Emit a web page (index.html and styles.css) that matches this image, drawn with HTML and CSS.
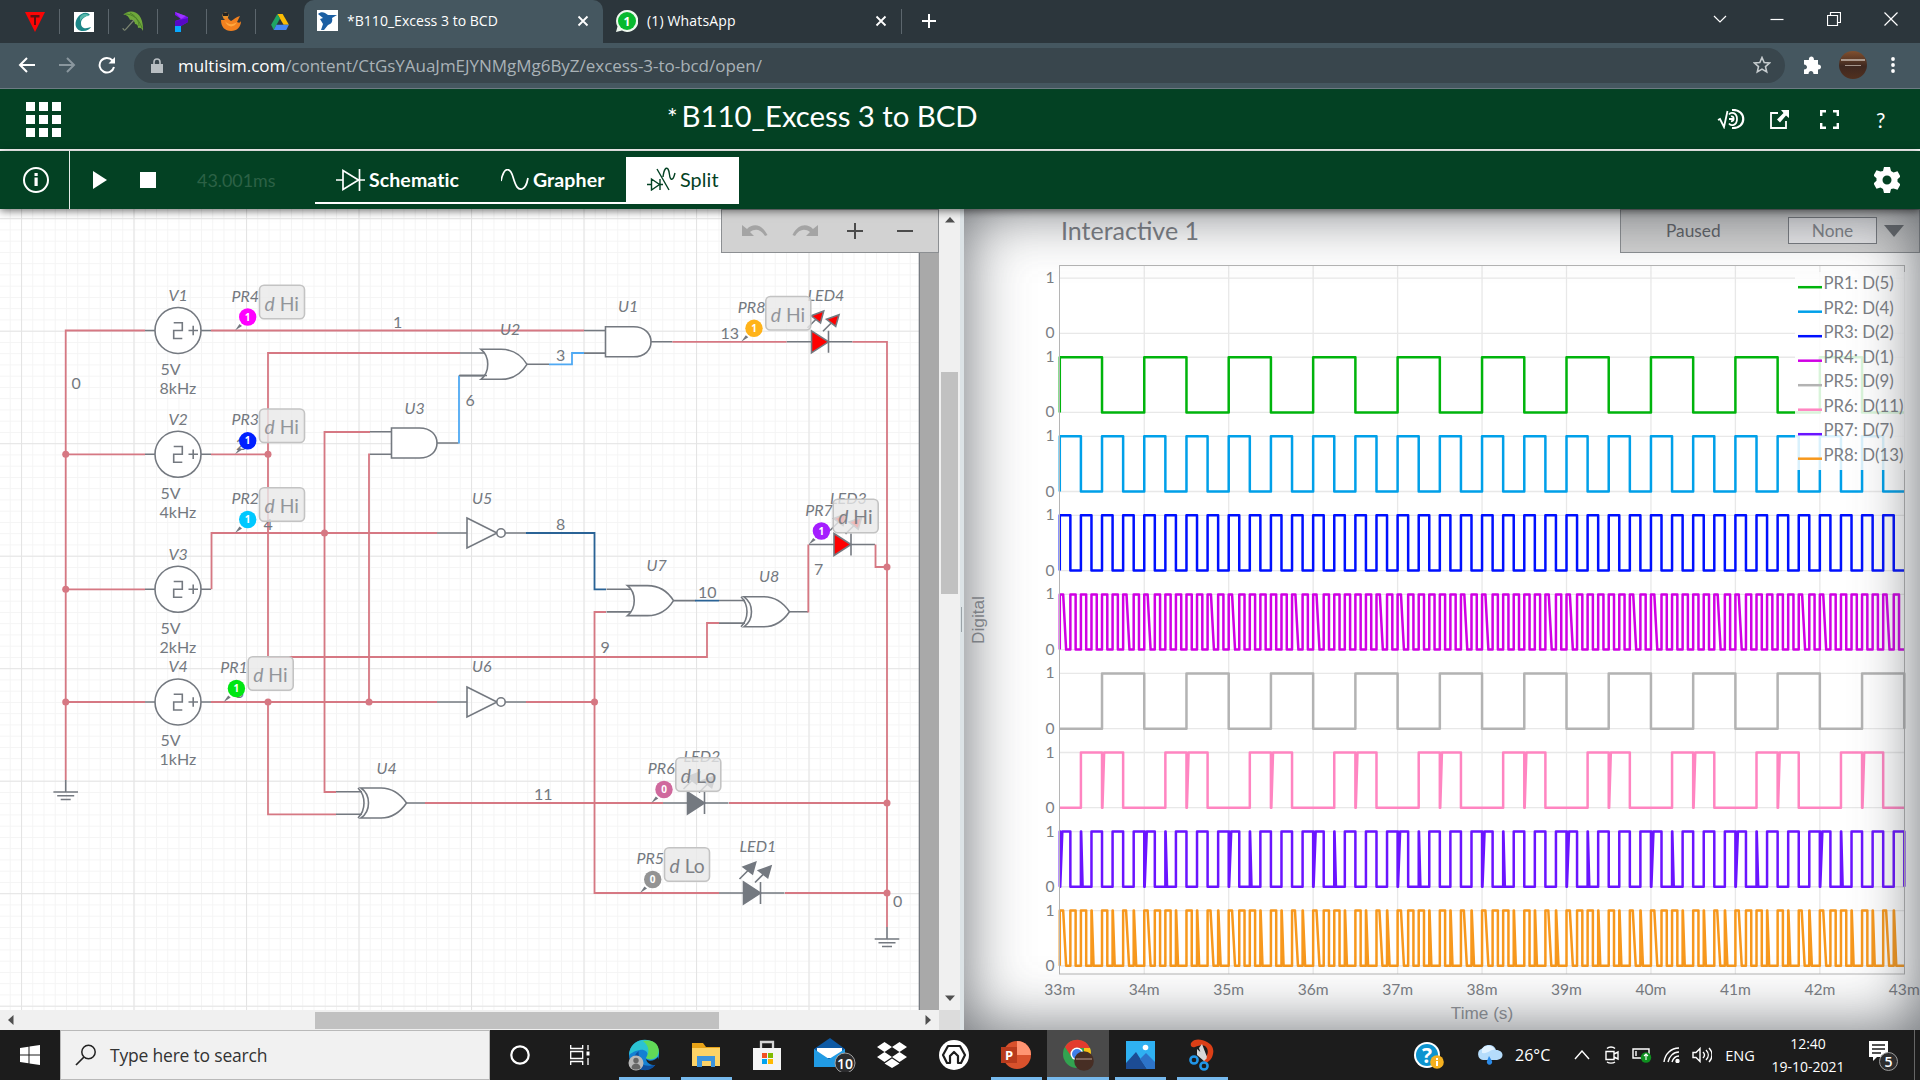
FILE: index.html
```html
<!DOCTYPE html>
<html lang="en">
<head>
<meta charset="utf-8">
<title>*B110_Excess 3 to BCD</title>
<link rel="stylesheet" href="styles.css">
</head>
<body>
<div class="screen">

  <div class="tabstrip">
    <div class="pinned"><svg width="20" height="20" viewBox="0 0 20 20"><path d="M0 0h20L10 20z" fill="#fb0505"/><path d="M5.500 3h9v2.500H11V13H9V5.500H5.500z" fill="#5d1010"/></svg></div>
    <div class="pinned"><svg width="20" height="20" viewBox="0 0 20 20"><path d="M0 0h20v20H0z" fill="#fff"/><path d="M16 3C13-1 7 1 4 5c-5 7-2 14 5 14 4 0 7-2 8-4-5 2-10 2-10-4 0-4 4-7 9-8z" fill="#1c8587"/><path d="M6 5c3-4 7-4 9-1-4 0-7 2-9 5z" fill="#55b6a9"/></svg></div>
    <div class="pinned"><svg width="22" height="22" viewBox="0 0 22 22"><path d="M1 4C8-3 22 0 21 20c-1-3-3-4-5-3 0-3-1-4-3-4 0-3-3-5-5-4C7 6 4 3 1 4z" fill="#6fa83b"/><path d="M3 3c8 0 14 5 17 14M8 2c6 3 9 8 9 13" stroke="#4b7f28" fill="none" stroke-width="1"/><path d="M12 9L4 18c-1 2-3 1-3-1" stroke="#7c8570" stroke-width="1.200" fill="none"/></svg></div>
    <div class="pinned"><svg width="14" height="20" viewBox="0 0 14 20"><path d="M0 0l13 5v5l-7 4H0V9l6-2-6-4z" fill="#7b12f4"/><path d="M0 0l11 4-5 3z" fill="#9d35ff"/><path d="M0 13l6-2v9H0z" fill="#08a8ff"/><path d="M0 9l13-3v4l-7 4H0z" fill="#5708c7"/></svg></div>
    <div class="pinned"><svg width="20" height="20" viewBox="0 0 20 20"><path d="M0 8c0 7 4 11 10 11s10-4 10-10c-1 2-2 2-4 1l3-6c-4 1-7 4-9 5C8 8 7 6 6 4L2 6l2 2z" fill="#f2811f"/><path d="M4 9c3 4 8 4 12 1-2 5-9 7-12-1z" fill="#ffa83f"/><circle cx="4.500" cy="3.500" r="3" fill="#e8932b"/><path d="M2 1h5v3H2z" fill="#222"/></svg></div>
    <div class="pinned last"><svg width="18" height="16" viewBox="0 0 20 18"><path d="M7 0h6l7 12h-6z" fill="#fbbc04"/><path d="M7 0L0 12l3 6L10 5z" fill="#1fa463"/><path d="M6 12h14l-3 6H3z" fill="#4587f4"/></svg></div>
    <div class="tab active">
      <svg class="favicon" width="21" height="21" viewBox="0 0 21 21"><path d="M0 0h21v21H0z" fill="#fff"/><path d="M1 4c2-2 5-2 7-1l3 2h9l-5 3c1 4-1 6-4 7l-4 5H4l2-6-3-5 3-1z" fill="#1b5fa3"/></svg>
      <span class="tab-title t1">*B110_Excess 3 to BCD</span>
      <svg class="tab-close" width="12" height="12" viewBox="0 0 12 12"><path d="M1.500 1.500l9 9M10.500 1.500l-9 9"/></svg>
    </div>
    <div class="tab">
      <svg class="favicon" width="22" height="22" viewBox="0 0 22 22"><path d="M11 0a11 11 0 1 1-5 20.600L0 22l1.500-5.500A11 11 0 0 1 11 0z" fill="#eef8ee"/><circle cx="11" cy="11" r="9" fill="#08b92f"/><text x="11" y="15.500" text-anchor="middle" class="wa-count">1</text></svg>
      <span class="tab-title t2">(1) WhatsApp</span>
      <svg class="tab-close" width="12" height="12" viewBox="0 0 12 12"><path d="M1.500 1.500l9 9M10.500 1.500l-9 9"/></svg>
    </div>
    <svg class="new-tab" width="16" height="16" viewBox="0 0 16 16"><path d="M8 1v14M1 8h14"/></svg>
    <div class="window-controls">
      <svg width="14" height="14" viewBox="0 0 14 14"><path d="M1 4l6 6 6-6"/></svg>
      <svg width="14" height="14" viewBox="0 0 14 14"><path d="M.500 7.500h13"/></svg>
      <svg width="14" height="14" viewBox="0 0 14 14"><path d="M.500 3.500h10v10H.500zM3.500 3V.500h10v10H11"/></svg>
      <svg width="14" height="14" viewBox="0 0 14 14"><path d="M.500.500l13 13M13.500.500l-13 13"/></svg>
    </div>
  </div>

  <div class="navbar">
    <svg width="18" height="18" viewBox="0 0 18 18" class="nav"><path d="M17 9H2M9 2L2 9l7 7"/></svg>
    <svg width="18" height="18" viewBox="0 0 18 18" class="nav dim"><path d="M1 9h15M9 2l7 7-7 7"/></svg>
    <svg width="18" height="18" viewBox="0 0 18 18" class="nav"><path d="M16 11a7.300 7.300 0 1 1-1.500-6.500L16 6"/><path d="M17 1v6.500h-6.500z" fill="#fff" stroke="none"/></svg>
    <div class="omnibox">
      <svg width="12" height="15" viewBox="0 0 12 15"><path d="M0 6h12v9H0z" fill="#b8bec2"/><path d="M3 6V4a3 3 0 0 1 6 0v2" fill="none" stroke="#b8bec2" stroke-width="1.600"/></svg>
      <span class="url"><b>multisim.com</b>/content/CtGsYAuaJmEJYNMgMg6ByZ/excess-3-to-bcd/open/</span>
      <svg class="star" width="18" height="18" viewBox="0 0 18 18"><path d="M9 1.500l2.200 5 5.300.500-4 3.600 1.200 5.300L9 13.100l-4.700 2.800 1.200-5.300-4-3.600 5.300-.500z"/></svg>
    </div>
    <svg class="puzzle" width="18" height="18" viewBox="0 0 18 18"><path d="M1 4h5c-1-4 5-5 5 0h4v4.500c4 0 4 5 0 5V18h-4.500c0-4-5-4-5 0H1v-4.500c4 0 4-4.500 0-5z" fill="#fff"/></svg>
    <div class="avatar"><i></i><i></i></div>
    <svg width="4" height="18" viewBox="0 0 4 18"><circle cx="2" cy="3" r="1.900"/><circle cx="2" cy="9" r="1.900"/><circle cx="2" cy="15" r="1.900"/></svg>
  </div>

  <div class="app-header">
    <div class="apps"><i></i><i></i><i></i><i></i><i></i><i></i><i></i><i></i><i></i></div>
    <h1><sup>*</sup>B110_Excess 3 to BCD</h1>
    <div class="header-icons">
      <svg width="29" height="20" viewBox="0 0 29 20"><path d="M1 11l2-1 4 8L10.500 2"/><path d="M12 5.500c2-3 8-2 8 4.500s-6 7.500-8 4.500M12 10h5M14 7.500c3-1 4 4 0 5"/><path d="M15 1c15-1 15 19 0 18" stroke-width="2.200"/></svg>
      <svg width="19" height="19" viewBox="0 0 19 19"><path d="M8 3H1v15h15v-7"/><path d="M11 0h8v8l-3-2.500-6 7-3-3 6.500-6.500z" fill="#fff" stroke="none"/></svg>
      <svg width="19" height="19" viewBox="0 0 19 19"><path d="M1.200 6V1.200H6M13 1.200h4.800V6M17.800 13v4.800H13M6 17.800H1.200V13" stroke-width="2.400"/></svg>
      <span>?</span>
    </div>
  </div>

  <div class="app-toolbar">
    <div class="info"><svg width="28" height="28" viewBox="0 0 28 28"><circle cx="14" cy="14" r="12" fill="none" stroke="#fff" stroke-width="2"/><path d="M12.500 11.500h3.200V20h-3.200zM12.500 7h3.200v3h-3.200z" fill="#fff"/></svg></div>
    <svg class="play" width="14" height="18" viewBox="0 0 14 18"><path d="M0 0l14 9L0 18z" fill="#fff"/></svg>
    <div class="stop"></div>
    <span class="sim-time">43.001ms</span>
    <div class="views">
      <div class="view schematic"><svg width="29" height="22" viewBox="0 0 29 22"><path d="M0 11h7M7 1.500v19L22.500 11zM23.500 0v22M23.500 11H29"/></svg>Schematic</div>
      <div class="view grapher"><svg width="28" height="22" viewBox="0 0 28 22"><path d="M0 12C3-3 9-2 12 8s5 13 9 12c4-1 5-6 6-11"/></svg>Grapher</div>
      <div class="view split"><svg width="29" height="24" viewBox="0 0 29 24"><path d="M0 17.500h4.500M4.500 12v11l8-5.500zM13 12v11M13 17.500h3M10 2l12 21M16 10c1-8 3-10 5-8 2 3 1 9 3 10 2 1 3-2 4-6"/></svg>Split</div>
    </div>
    <svg class="gear" width="26" height="28" viewBox="-13 -14 26 28"><path fill-rule="evenodd" d="M-3-13h6l1 4 2.500 1.500 4-1.200 3 5.200-3 2.800v2.400l3 2.800-3 5.200-4-1.200L4 9l-1 4h-6l-1-4-2.500-1.500-4 1.200-3-5.200 3-2.800v-2.400l-3-2.800 3-5.200 4 1.200L-4-9zM0-4.500A4.500 4.500 0 1 0 0 4.500 4.500 4.500 0 1 0 0-4.500z" fill="#fff"/></svg>
  </div>

  <div class="workspace">
    <div class="schematic-pane">
      <div class="canvas">
        <svg class="drawing" width="939" height="801" viewBox="0 209 939 801">
          <defs>
            <pattern id="minor" width="11.25" height="11.25" patternUnits="userSpaceOnUse" x="21" y="218.200"><path d="M0 .500H11.250M.500 0V11.250" stroke="#f4f4f4" stroke-width="1" fill="none"/></pattern>
            <pattern id="major" width="112.500" height="112.500" patternUnits="userSpaceOnUse" x="21" y="218.200"><path d="M0 .500H112.500M.500 0V112.500" stroke="#e4e4e4" stroke-width="1.200" fill="none"/></pattern>
            <g id="source"><path d="M-33 0h10M23 0h10"/><circle r="23" fill="#fff"/><path d="M-4.300-7.800H4.300V0H-4.300V8H4.300M10.500 0h9.500M15.200-4.700v9.400"/></g>
            <g id="and"><path d="M-21.500-11.300H0M-21.500 11.300H0M45.500 0H67"/><path d="M0-15H28C39.500-15 45.500-8 45.500 0S39.500 15 28 15H0z" fill="#fff"/></g>
            <g id="or"><path d="M-21-11.300H5.500M-21 11.300H5.500M46 0H68"/><path d="M0-15H20C32-15 41-8 46 0 41 8 32 15 20 15H0C9 8 9-8 0-15z" fill="#fff"/></g>
            <g id="xor"><path d="M-22-11.300H4M-22 11.300H4M48.500 0H67"/><path d="M3-15H23C34-15 43-8 48.500 0 43 8 34 15 23 15H3C13 8 13-8 3-15z" fill="#fff"/><path d="M0-15C8-7 8 7 0 15"/></g>
            <g id="not"><path d="M-30 0H0M38 0H59.500M0-15L30 0 0 15z"/><circle cx="34" r="4.200" fill="#fff"/></g>
            <g id="led"><path d="M-25 0H0M17 0H41M17-11V11"/><path d="M0-11L17 0 0 11z"/><path d="M-4-14L8-26M11.500-10.500L23-22"/><path d="M12.200-30.700L-.300-26 9-19zM27.500-27L15-22.500l9.200 7.200z"/></g>
            <g id="ground"><path d="M0-11V1M-12.300 1H12.300M-8.500 4.700H8.500M-5 8.500H5"/></g>
            <path id="pointer" d="M0 0L4.500-6.500 7-4.500z"/>
          </defs>
          <rect x="0" y="209" width="919" height="801" fill="#fff"/>
          <rect x="0" y="209" width="919" height="801" fill="url(#minor)"/>
          <rect x="0" y="209" width="919" height="801" fill="url(#major)"/>
          <rect x="919" y="209" width="20" height="801" fill="#a9a9a9"/>
          <rect x="918.700" y="209" width="1.300" height="801" fill="#777c82"/>

          <g class="parts">
            <use href="#source" x="178" y="330.500"/><use href="#source" x="178" y="454.300"/><use href="#source" x="178" y="589.300"/><use href="#source" x="178" y="702"/>
            <use href="#and" x="605.500" y="341.800"/><use href="#and" x="391.500" y="443"/>
            <use href="#or" x="481" y="364.300"/><use href="#or" x="627.500" y="600.600"/>
            <use href="#xor" x="741" y="611.800"/><use href="#xor" x="358" y="803"/>
            <use href="#not" x="467" y="533"/><use href="#not" x="467" y="702"/>
            <use href="#ground" x="65.700" y="791"/><use href="#ground" x="887" y="938"/>
            <use href="#led" class="lit" x="811.500" y="341.800"/><use href="#led" class="lit" x="834" y="544.500"/>
            <use href="#led" class="unlit" x="687.500" y="803"/><use href="#led" class="unlit" x="743.500" y="893"/>
          </g>
          <g class="wires">
            <path d="M145 330.500H65.700V780M65.700 454.300H145M65.700 589.300H145M65.700 702H145M211 330.500H584M211 454.300H268M460 353H268V657H707V623H719M211.500 589.300V533H437M370 432H324.500V792H336M370 454.300H369V702M211 702H437M268 702V814.300H336M425 803H663M729 803H887M606 612H594.500V893H719M526 702H594.500M785 893H887M672.500 341.800H786.500M852.500 341.800H887V927M808.300 612.500V544.500M875.500 544.500V567H887"/>
            <path class="blue" d="M549 364.300H572V353H584M459 443.500V375.500"/>
            <path class="navy" d="M526 533H594.500V589.300H606M695 600.600H719"/>
          </g>
          <path class="lead" d="M459 375.500H487"/>
          <g class="dots"><circle cx="65.700" cy="454.300" r="3.500"/><circle cx="65.700" cy="589.300" r="3.500"/><circle cx="65.700" cy="702" r="3.500"/><circle cx="268" cy="454.300" r="3.500"/><circle cx="324.500" cy="533" r="3.500"/><circle cx="268" cy="702" r="3.500"/><circle cx="369" cy="702" r="3.500"/><circle cx="594.500" cy="702" r="3.500"/><circle cx="887" cy="567" r="3.500"/><circle cx="887" cy="803" r="3.500"/><circle cx="887" cy="893" r="3.500"/></g>

          <g class="name">
            <text x="168.500" y="301">V1</text><text x="168.500" y="425">V2</text><text x="168.500" y="560">V3</text><text x="168.500" y="672">V4</text>
            <text x="618" y="312">U1</text><text x="500" y="335">U2</text><text x="404.500" y="414">U3</text><text x="376.500" y="774">U4</text><text x="472" y="504">U5</text><text x="472" y="672">U6</text><text x="646.500" y="571">U7</text><text x="759" y="582">U8</text>
            <text x="739.500" y="852">LED1</text><text x="683.500" y="762">LED2</text><text x="830" y="504">LED3</text><text x="807.500" y="301">LED4</text>
          </g>
          <g class="value">
            <text x="160.500" y="375">5V</text><text x="159.500" y="394">8kHz</text><text x="160.500" y="499">5V</text><text x="159.500" y="518">4kHz</text>
            <text x="160.500" y="634">5V</text><text x="159.500" y="653">2kHz</text><text x="160.500" y="746">5V</text><text x="159.500" y="765">1kHz</text>
            <text x="71.500" y="389">0</text><text x="393" y="328">1</text><text x="556" y="361">3</text><text x="465.500" y="406">6</text><text x="720.500" y="339">13</text><text x="263.500" y="530">4</text><text x="556" y="530">8</text><text x="698" y="597.500">10</text><text x="600.500" y="653">9</text><text x="814" y="575">7</text><text x="534" y="800">11</text><text x="893" y="907">0</text><text x="236" y="450">2</text><text x="235" y="698">5</text>
          </g>

          <g transform="translate(235 330.500)" class="probe"><use href="#pointer"/><circle cx="12.700" cy="-13.500" r="8.700" fill="#f0f"/><text class="name" x="-3.500" y="-28.500">PR4</text><text class="bit" x="12.700" y="-10">1</text><rect x="24.500" y="-45.300" width="45" height="33.500" rx="4.500"/><text class="state" x="29.500" y="-20"><tspan>d</tspan> Hi</text></g>
          <g transform="translate(235 454.300)" class="probe"><use href="#pointer"/><circle cx="12.700" cy="-13.500" r="8.700" fill="#0020ff"/><text class="name" x="-3.500" y="-29.300">PR3</text><text class="bit" x="12.700" y="-10">1</text><rect x="24.500" y="-45.300" width="45" height="33.500" rx="4.500"/><text class="state" x="29.500" y="-20.800"><tspan>d</tspan> Hi</text></g>
          <g transform="translate(235 533)" class="probe"><use href="#pointer"/><circle cx="12.700" cy="-13.500" r="8.700" fill="#00c8ff"/><text class="name" x="-3.500" y="-29">PR2</text><text class="bit" x="12.700" y="-10">1</text><rect x="24.500" y="-45.300" width="45" height="33.500" rx="4.500"/><text class="state" x="29.500" y="-20.500"><tspan>d</tspan> Hi</text></g>
          <g transform="translate(223.700 702)" class="probe"><use href="#pointer"/><circle cx="12.700" cy="-13.500" r="8.700" fill="#00e613"/><text class="name" x="-3.500" y="-29">PR1</text><text class="bit" x="12.700" y="-10">1</text><rect x="24.500" y="-45.300" width="45" height="33.500" rx="4.500"/><text class="state" x="29.500" y="-20.500"><tspan>d</tspan> Hi</text></g>
          <g transform="translate(741.300 341.800)" class="probe"><use href="#pointer"/><circle cx="12.700" cy="-13.500" r="8.700" fill="#ffb31a"/><text class="name" x="-3.500" y="-28.500">PR8</text><text class="bit" x="12.700" y="-10">1</text><rect x="24.500" y="-45.300" width="45" height="33.500" rx="4.500"/><text class="state" x="29.500" y="-20.200"><tspan>d</tspan> Hi</text></g>
          <g transform="translate(808.700 544.500)" class="probe"><use href="#pointer"/><circle cx="12.700" cy="-13.500" r="8.700" fill="#a41dff"/><text class="name" x="-3.500" y="-29">PR7</text><text class="bit" x="12.700" y="-10">1</text><rect x="24.500" y="-45.300" width="45" height="33.500" rx="4.500"/><text class="state dark" x="29.500" y="-20.500"><tspan>d</tspan> Hi</text></g>
          <g transform="translate(651.300 803)" class="probe"><use href="#pointer"/><circle cx="12.700" cy="-13.500" r="8.700" fill="#cf699d"/><text class="name" x="-3.500" y="-29">PR6</text><text class="bit" x="12.700" y="-10">0</text><rect x="24.500" y="-45.300" width="45" height="33.500" rx="4.500"/><text class="state dark" x="29.500" y="-20.500"><tspan>d</tspan> Lo</text></g>
          <g transform="translate(640 893)" class="probe"><use href="#pointer"/><circle cx="12.700" cy="-13.500" r="8.700" fill="#939393"/><text class="name" x="-3.500" y="-29">PR5</text><text class="bit" x="12.700" y="-10">0</text><rect x="24.500" y="-45.300" width="45" height="33.500" rx="4.500"/><text class="state dark" x="29.500" y="-20.500"><tspan>d</tspan> Lo</text></g>
        </svg>
        <div class="zoom-tools">
          <svg width="26" height="12" viewBox="0 0 26 12" class="faded"><path d="M0 0v11h12l-4-4c5-4 11-3 15 4l2.500-1C20-1 11-2 5 4z"/></svg>
          <svg width="26" height="12" viewBox="0 0 26 12" class="faded"><path d="M26 0v11H14l4-4C13 3 7 4 3 11L.500 10C6-1 15-2 21 4z"/></svg>
          <svg width="16" height="16" viewBox="0 0 16 16"><path d="M7 0h2v7h7v2H9v7H7V9H0V7h7z"/></svg>
          <svg width="16" height="16" viewBox="0 0 16 16"><path d="M0 7h16v2H0z"/></svg>
        </div>
      </div>
      <div class="vbar"><svg width="10" height="6"><path d="M0 5.500L5 0l5 5.500z"/></svg><div class="vthumb"></div><svg width="10" height="6"><path d="M0 .500L5 6l5-5.500z"/></svg></div>
      <div class="hbar"><svg width="6" height="10"><path d="M5.500 0L0 5l5.500 5z"/></svg><div class="hthumb"></div><svg width="6" height="10"><path d="M.500 0L6 5 .500 10z"/></svg></div>
      <div class="corner"></div>
    </div>
    <div class="splitter"><i></i></div>
    <div class="graph-pane">
      <div class="graph-head">
        <h2>Interactive 1</h2>
        <div class="status"><span>Paused</span><div class="select">None</div><svg width="20" height="12" viewBox="0 0 20 12"><path d="M0 0h20L10 12z"/></svg></div>
      </div>
      <svg class="plot" width="956" height="777" viewBox="964 253 956 777">
        <rect class="plot-bg" x="1059.500" y="265.500" width="845" height="708.500"/>
        <g id="grid"></g>
        <g id="waves"></g>
        <rect class="frame" x="1059.500" y="265.500" width="845" height="708.500"/>
        <rect x="1795" y="272" width="125" height="198" fill="#fff" fill-opacity=".85"/>
        <g id="legend"></g>
        <g id="ticks"></g>
        <text class="axis" x="1482" y="1018.500" text-anchor="middle">Time (s)</text>
        <text class="axis" transform="translate(983.500 620) rotate(-90)" text-anchor="middle">Digital</text>
      </svg>
      <div class="vignette"></div>
    </div>
  </div>

  <div class="taskbar">
    <div class="start"><svg width="20" height="20" viewBox="0 0 20 20"><path d="M0 3l8.500-1.200v7.700H0zM9.500 1.600L20 0v9.500H9.500zM0 10.500h8.500v7.700L0 17zM9.500 10.500H20V20L9.500 18.400z" fill="#fff"/></svg></div>
    <div class="search"><svg width="22" height="22" viewBox="0 0 22 22"><circle cx="13.500" cy="8" r="6.700" fill="none" stroke="#222" stroke-width="1.500"/><path d="M9 13L1 21" stroke="#222" stroke-width="1.700"/></svg>Type here to search</div>
    <div class="app cortana"><svg width="22" height="22" viewBox="0 0 22 22"><circle cx="11" cy="11" r="8.700" fill="none" stroke="#fff" stroke-width="2.200"/></svg></div>
    <div class="app taskview"><svg width="20" height="20" viewBox="0 0 20 20" fill="none" stroke="#fff" stroke-width="1.300"><path d="M.700 0v3.500h12V0M.700 6.500h12v7h-12zM.700 20v-3.500h12V20M18 0v5M18 13v7"/><path d="M16.500 6.500h3v4h-3z" fill="#fff" stroke="none"/></svg></div>
    <div class="app open"><svg width="32" height="32" viewBox="0 0 32 32"><circle cx="16" cy="16" r="15" fill="#1480d3"/><path d="M1 17C1-4 30-4 31 13c0 8-9 9-13 6 4-4 0-9-6-8S1 15 1 17z" fill="#2bc3d2"/><path d="M15 2c12-3 18 6 15 13-2 6-10 6-12 4 4-7 3-12-3-17z" fill="#62d957"/><path d="M11 18c0 8 8 11 17 7-5 8-14 7-18 4-6-5-6-12 1-17-1 2 0 4 0 6z" fill="#0e4f9e"/><path d="M18 20c3 3 9 2 12-2l2 7-5 1c-5 0-8-2-9-6z" fill="#1d1d1d"/><circle cx="8" cy="24" r="7.500" fill="#b8b8b8"/><circle cx="8" cy="21.500" r="2.700" fill="#666"/><path d="M3.500 29c0-6 9-6 9 0-2 2-7 2-9 0z" fill="#666"/></svg></div>
    <div class="app open"><svg width="28" height="24" viewBox="0 0 28 24"><path d="M0 0h11l3 4h14v18H0z" fill="#e8a317"/><path d="M0 5h28v18H0z" fill="#fdd367"/><path d="M5 13h18v11h-4v-6h-9v6H5z" fill="#3d94dd"/></svg></div>
    <div class="app store"><svg width="30" height="30" viewBox="0 0 30 30"><path d="M9 9V2h12v7" fill="none" stroke="#d5d5d5" stroke-width="2.300"/><path d="M1 8h28v22H1z" fill="#f4f4f4"/><path d="M10 13h5v5h-5z" fill="#f25022"/><path d="M16 13h5v5h-5z" fill="#7fba00"/><path d="M10 19h5v5h-5z" fill="#00a4ef"/><path d="M16 19h5v5h-5z" fill="#ffb900"/></svg></div>
    <div class="app"><svg class="mail" width="44" height="34" viewBox="0 0 44 34"><path d="M0 11L16 0l15 11v17H0z" fill="#0c59a4"/><path d="M3 10h25v10H3z" fill="#fff"/><path d="M0 11l15 10 16-10v18H0z" fill="#219be4"/><circle cx="31" cy="25" r="10" fill="#2c2c2e" stroke="#a0a0a0"/><text x="31" y="30.500" text-anchor="middle" class="count">10</text></svg></div>
    <div class="app"><svg width="30" height="26" viewBox="0 0 30 26"><path d="M7.500 0L15 5 7.500 10 0 5zM22.500 0L30 5l-7.500 5L15 5zM7.500 10L15 15l-7.500 5L0 15zM22.500 10L30 15l-7.500 5L15 15zM15 16.500l7.500 5L15 26l-7.500-4.500z" fill="#fff"/></svg></div>
    <div class="app"><svg width="30" height="30" viewBox="0 0 30 30"><circle cx="15" cy="15" r="15" fill="#fff"/><path d="M9 6h12l5 9-4 8h-3v-7l-4-4-4 4v7H8l-4-8z" fill="#fff" stroke="#1c1c1c" stroke-width="2.200" stroke-linejoin="round"/></svg></div>
    <div class="app open"><svg width="30" height="28" viewBox="0 0 30 28"><circle cx="16" cy="14" r="14" fill="#d9512c"/><path d="M16 0a14 14 0 0 1 14 14H16z" fill="#ff9472"/><path d="M0 6h16v16H0z" fill="#b83b1d"/><text x="8" y="19" text-anchor="middle" class="ppt">P</text></svg></div>
    <div class="app open current"><svg width="32" height="32" viewBox="0 0 32 32"><circle cx="15" cy="15" r="14" fill="#32a350"/><path d="M3 8A14 14 0 0 1 28 9H15a6 6 0 0 0-6 8z" fill="#e33b2e"/><path d="M28 9c3 7-1 20-13 20l7-12V9z" fill="#fbc116"/><circle cx="15" cy="15" r="6.500" fill="#fff"/><circle cx="15" cy="15" r="5" fill="#3f7fe8"/><circle cx="22" cy="22" r="9.800" fill="#472e24"/><path d="M14 19h16v2H14z" fill="#80655a"/></svg></div>
    <div class="app open"><svg width="29" height="28" viewBox="0 0 29 28"><path d="M0 0h29v28H0z" fill="#2fb1f2"/><path d="M0 22l10-11 11 17H0z" fill="#1c4c94"/><path d="M14 18l6-6 9 9v7h-8z" fill="#2d74c9"/><circle cx="19.500" cy="6.500" r="2.800" fill="#fff"/></svg></div>
    <div class="app open"><svg width="30" height="32" viewBox="0 0 30 32"><path d="M4 4C7-1 15 0 20 3c6 3 7 8 6 12-1 5-4 8-8 9l-2-4c6-3 6-10 2-13-3-2-8 0-10 1C5 9 3 7 4 4z" fill="#dc3f16"/><path d="M15 5l5 13-4 3-4-12zM10 10l10 9-3 3-7-6z" fill="#d7d7d7"/><circle cx="7" cy="21" r="3.600" fill="none" stroke="#2196e8" stroke-width="2.500"/><circle cx="17" cy="27" r="3.600" fill="none" stroke="#2196e8" stroke-width="2.500"/></svg></div>
    <div class="tray">
      <div class="help"><svg width="30" height="28" viewBox="0 0 30 28"><circle cx="13" cy="14" r="13" fill="#fff"/><circle cx="13" cy="14" r="11" fill="#0d94cf"/><text x="13" y="21.500" text-anchor="middle" class="qm">?</text><circle cx="23" cy="21" r="6.800" fill="#f5b01f"/><path d="M22 20h2v5h-2zM22 17h2v2h-2z" fill="#fff"/></svg></div>
      <div class="cloud"><svg width="27" height="20" viewBox="0 0 27 20"><path d="M7 15a6 6 0 0 1-1-11.500C10-2 18-1 20 5c8 0 9 9 1 10z" fill="#b5dcfb"/><path d="M6 4c4-5 11-4 13 1-5-1-6 4-13 3z" fill="#e1f2ff"/><path d="M13 11l3 5a2.700 2.700 0 1 1-5 0z" fill="#2c8be8"/></svg></div>
      <div class="temp">26°C</div>
      <div class="cell"><svg width="16" height="10" viewBox="0 0 16 10"><path d="M1 9l7-8 7 8"/></svg></div>
      <div class="cell"><svg width="16" height="18" viewBox="0 0 16 18"><path d="M2 5.500h8v8H2zM10 8l4-2v7l-4-2M3 2.500C5 .500 9 .500 11 2.500M3 16c2 1.500 6 1.500 8 0"/></svg></div>
      <div class="cell"><svg width="20" height="16" viewBox="0 0 20 16"><path d="M1 2h16v9H1zM4 4v5"/><circle cx="14" cy="10.500" r="5.200" fill="#0f9020" stroke="none"/><path d="M14 7v6M12 9l2-2 2 2" stroke-width="1.100"/></svg></div>
      <div class="cell"><svg width="18" height="16" viewBox="0 0 18 16"><path d="M1 15C2 7 8 1 16 1M5 15C6 10 10 5 16 5M9 15c1-3 3-6 7-6"/><circle cx="14.500" cy="14" r="1.500" fill="#fff"/></svg></div>
      <div class="cell"><svg width="20" height="16" viewBox="0 0 20 16"><path d="M1 5.500h3l4-4v13l-4-4H1zM11 5c2 2 2 4 0 6M14 3c3 3 3 7 0 10M17 1c4 4 4 10 0 14"/></svg></div>
      <div class="lang">ENG</div>
      <div class="clock"><span>12:40</span><span>19-10-2021</span></div>
      <div class="notes"><svg width="34" height="32" viewBox="0 0 34 32"><path d="M2 2h19v16H10l-4 4v-4H2z" fill="#fff"/><path d="M5 6h13M5 10h13M5 14h9" stroke="#1c1c1c" stroke-width="1.300"/><circle cx="21.500" cy="22.500" r="9" fill="#2d2d2e" stroke="#9a9a9a"/><text x="21.500" y="27.500" text-anchor="middle" class="count">5</text></svg></div>
      <div class="peek"></div>
    </div>
  </div>
</div>
<script src="script.js"></script>
</body>
</html>
```
FILE: styles.css
```css
* { box-sizing: border-box; }
body { margin: 0; background: #1c1c1c; font-family: Lato, "Noto Sans", sans-serif; }
.screen { width: 1920px; height: 1080px; overflow: hidden; display: flex; flex-direction: column; }
svg { display: block; flex: none; }
h1, h2 { margin: 0; font-weight: 400; }

/* browser tabs */
.tabstrip { height: 43px; background: #2c363c; display: flex; align-items: center; padding-left: 10px; font-family: "Open Sans", sans-serif; color: #fff; }
.pinned { width: 49px; height: 25px; display: flex; align-items: center; justify-content: center; border-right: 1px solid #5c666d; }
.pinned.last { width: 48px; border-right: 0; }
.pinned:first-child { width: 50px; }
.tab { width: 299px; height: 43px; display: flex; align-items: center; padding: 0 14px 2px 13px; }
.tab.active { background: #455760; border-radius: 10px 10px 0 0; }
.tab-title { margin-left: 9px; font-size: 14px; white-space: nowrap; flex: 1; }
.t1 { letter-spacing: .03px; }
.t2 { letter-spacing: .15px; }
.tab-close { stroke: #fff; stroke-width: 1.800; fill: none; }
.wa-count { font: 700 12px "Open Sans", sans-serif; fill: #fff; }
.new-tab { margin: 0 0 1px 19px; stroke: #fff; stroke-width: 2; }
.tab:not(.active) { border-right: 1px solid #5c666d; height: 25px; }
.window-controls { margin-left: auto; display: flex; gap: 43px; padding: 0 22px 5px 0; }
.window-controls svg { fill: none; stroke: #fff; stroke-width: 1.200; }

.navbar { height: 46px; background: #455760; border-bottom: 1px solid #6d7b83; display: flex; align-items: center; padding: 0 25px 1px 18px; }
.nav { fill: none; stroke: #fff; stroke-width: 2; margin-right: 22px; }
.nav.dim { stroke: #8a979e; margin-right: 22px; }
.nav:nth-of-type(3) { margin-right: 18px; }
.omnibox { width: 1651px; height: 35px; border-radius: 18px; background: #39464d; display: flex; align-items: center; padding: 0 14px 0 17px; }
.url { flex: 1; margin-left: 15px; font: 17px "Open Sans", sans-serif; letter-spacing: -.03px; color: #a9b2b7; white-space: nowrap; }
.url b { font-weight: 400; color: #fff; }
.star { fill: none; stroke: #c5cbce; stroke-width: 1.600; }
.puzzle { margin-left: 18px; }
.avatar { width: 28px; height: 28px; border-radius: 50%; background: linear-gradient(#81502f, #3e2820 55%, #51301f); margin: 0 24px 0 18px; display: flex; flex-direction: column; align-items: center; gap: 4px; padding-top: 8px; overflow: hidden; }
.avatar i { width: 24px; height: 2px; background: #cfc3b9; opacity: .7; }
.avatar i + i { width: 16px; height: 1px; }
.navbar circle { fill: #fff; }

/* application header */
.app-header { height: 62px; background: #034123; border-bottom: 2px solid #fff; display: flex; align-items: center; padding: 0 32px 0 26px; color: #fff; }
.apps { display: grid; grid-template-columns: repeat(3, 9px); gap: 4px; }
.apps i { width: 9px; height: 9px; background: #fff; }
h1 { margin-left: 606px; font-size: 29.400px; line-height: 34px; letter-spacing: -.050px; white-space: nowrap; padding-bottom: 6px; }
h1 sup { font-size: 25px; margin-right: 4px; vertical-align: 0; line-height: 0; }
.header-icons { margin-left: auto; display: flex; align-items: center; font-size: 21px; }
.header-icons svg { fill: none; stroke: #fff; stroke-width: 1.800; margin-right: 31px; }
.header-icons svg:first-child { margin-right: 24px; }
.header-icons svg:nth-child(3) { margin-right: 37px; }
.header-icons span { width: 12px; }

.app-toolbar { height: 58px; background: #034123; display: flex; align-items: center; color: #fff; padding-right: 20px; position: relative; z-index: 2; box-shadow: 0 2px 8px rgba(0, 0, 0, .55); }
.info { width: 70px; height: 58px; border-right: 1px solid #e5ece8; display: flex; align-items: center; padding-left: 22px; }
.play { margin-left: 23px; }
.stop { width: 16px; height: 16px; background: #fff; margin-left: 33px; }
.sim-time { width: 159px; padding-left: 41px; font-size: 17.900px; color: #2c6146; }
.views { display: flex; height: 47px; align-self: flex-start; margin: 6px 0 0; }
.view { border-bottom: 2px solid #fff; display: flex; align-items: center; font-size: 19.500px; letter-spacing: .1px; font-weight: 700; gap: 4px; white-space: nowrap; }
.view svg { fill: none; stroke: #fff; stroke-width: 1.700; }
.view.schematic { width: 165px; padding-left: 21px; }
.view.grapher { width: 146px; padding-left: 21px; }
.view.split { width: 113px; padding: 0 0 1px 21px; background: #fff; color: #034123; font-weight: 400; font-size: 19.800px; }
.view.split svg { stroke: #034123; stroke-width: 1.400; }
.gear { margin-left: auto; }

.workspace { height: 821px; display: flex; }
.schematic-pane { display: grid; grid-template: 801px 20px / 939px 21px; }
.canvas { position: relative; }
.vbar { background: #f0f0f0; display: flex; flex-direction: column; align-items: center; padding: 8px 1px 9px; }
.vthumb { width: 17px; height: 222px; background: #c1c1c1; margin: 149px 0 auto; }
.hbar { background: #f0f0f0; display: flex; align-items: center; padding: 0 8px; }
.hthumb { width: 404px; height: 17px; background: #c1c1c1; margin: 0 auto 0 301px; }
.vbar path, .hbar path { fill: #505050; }
.corner { background: #dcdcdc; }
.zoom-tools { position: absolute; right: 0; top: 0; width: 218px; height: 44px; background: #d2d2d2; border: 1px solid #8c8f92; display: flex; align-items: center; gap: 24px; padding-left: 20px; }
.zoom-tools svg { fill: #4b4b4b; }
.zoom-tools svg:nth-child(3) { margin-left: 5px; }
.zoom-tools svg:nth-child(4) { margin-left: 10px; }
.zoom-tools .faded { fill: #a4a4a4; }
.splitter { width: 4px; background: #dce3e6; padding: 398px 0 0 1px; }
.splitter i { display: block; width: 1px; height: 25px; background: #9aa3a8; }

/* schematic drawing */
.parts { stroke: #747980; stroke-width: 1.600; fill: none; }
.lit { fill: #f00; }
.unlit { fill: #747980; }
.lead { stroke: #747980; stroke-width: 1.600; }
.wires path { fill: none; stroke: #d67883; stroke-width: 1.800; }
.wires .blue { stroke: #4fa9f3; }
.wires .navy { stroke: #2a6396; }
.dots { fill: #d67883; }
.name { font: italic 16px Lato, sans-serif; fill: #747980; }
.value { font: 16px Lato, sans-serif; fill: #747980; }
.probe use { fill: #747980; }
.probe rect { fill: #e9e9e9; fill-opacity: .8; stroke: #c3c3c3; stroke-width: 1.600; }
.bit { font: 700 10px "Open Sans", sans-serif; fill: #fff; text-anchor: middle; }
.state { font: 19.300px Lato, sans-serif; fill: #92959a; }
.state.dark { fill: #7d8085; }
.state tspan { font-style: italic; }

/* grapher */
.graph-pane { width: 956px; position: relative; background: #fff; }
.graph-head { height: 44px; display: flex; justify-content: space-between; padding-left: 97px; }
h2 { font-size: 25px; line-height: 43px; color: #7b7e84; }
.status { width: 300px; height: 44px; background: #d2d2d2; border: 1px solid #8c8f92; display: flex; align-items: center; padding: 0 0 2px 45px; font-size: 17.300px; color: #5d6065; }
.status span { width: 122px; }
.select { width: 89px; height: 27px; border: 1px solid #777a7f; background: #e8e8ea; color: #808388; text-align: center; line-height: 25px; }
.status svg { margin: 2px 0 0 7px; fill: #65686c; }
.vignette { position: absolute; inset: 0; pointer-events: none; box-shadow: inset 0 0 62px rgba(65, 70, 76, .8); }
.plot-bg { fill: #fff; }
.frame { fill: none; stroke: #b5b5b5; }
.axis { font: 17.200px "Liberation Sans", sans-serif; fill: #92959a; }
#grid path { stroke: #e8e8e8; stroke-width: 1.300; }
#waves path { fill: none; stroke-width: 2.500; stroke-linejoin: round; }
#ticks text { font: 15.600px Lato, sans-serif; fill: #7b7e84; }
#legend text { font: 16.800px Lato, sans-serif; fill: #7b7e84; }
#legend path { stroke-width: 2.500; }

/* taskbar */
.taskbar { height: 50px; background: #1c1c1c; display: flex; color: #fff; font-family: "Open Sans", sans-serif; }
.start { width: 60px; display: flex; align-items: center; justify-content: center; }
.search { width: 430px; background: #f1f1f1; border: 1px solid #b9b9b9; display: flex; align-items: center; gap: 13px; padding-left: 14px; font-size: 17.500px; letter-spacing: -.2px; color: #333; }
.app { width: 62px; display: flex; align-items: center; justify-content: center; position: relative; }
.app.cortana { width: 60px; }
.app.taskview { width: 63px; padding-right: 4px; }
.app.store { padding-right: 2px; }
.app.open::after { content: ""; position: absolute; left: 6px; right: 5px; bottom: 0; height: 3px; background: #76b9ed; }
.app.current { background: #4a4a4a; }
.app.current::after { left: 0; right: 0; }
.mail { margin-left: 12px; }
.count { font: 600 14px "Open Sans", sans-serif; fill: #fff; }
.ppt { font: 700 13px "Open Sans", sans-serif; fill: #fff; }
.qm { font: 700 21px "Open Sans", sans-serif; fill: #fff; }
.tray { margin-left: auto; display: flex; align-items: center; }
.help { width: 71px; padding-left: 3px; display: flex; justify-content: center; }
.cloud { width: 52px; display: flex; justify-content: center; }
.temp { width: 52px; font-size: 16px; letter-spacing: 0; }
.cell { width: 30px; display: flex; justify-content: center; }
.cell svg { fill: none; stroke: #fff; stroke-width: 1.400; }
.lang { width: 46px; text-align: center; font-size: 14.500px; }
.clock { width: 90px; display: flex; flex-direction: column; align-items: center; font-size: 14px; line-height: 23px; letter-spacing: 0; }
.notes { width: 61px; padding-left: 14px; }
.peek { width: 6px; height: 50px; border-left: 1px solid #666; }
```
FILE: script.js
```js
const NS = 'http://www.w3.org/2000/svg';
const X0 = 1059.8, MS = 84.45, Y0 = 278.2, ROW = 79.05, SWING = 55.2;

function add(parent, tag, attrs, text) {
  const el = document.createElementNS(NS, tag);
  for (const key in attrs) el.setAttribute(key, attrs[key]);
  if (text) el.textContent = text;
  document.getElementById(parent).appendChild(el);
}

// Each pulse is [rise start, rise end, fall start, fall end] in ms, within one period.
const square = half => [[0, 0, half, half]];
const clock8k = [0, 1, 2, 3, 4, 5, 6, 7].map(i => {
  const t = i * 0.125;
  return i === 0 || i === 6 ? [t, t, t + 0.04, t + 0.075] : [t, t, t + 0.0625, t + 0.0625];
});
const signals = [
  { name: 'PR1: D(5)', color: '#00b40c', period: 1, pulses: square(0.5) },
  { name: 'PR2: D(4)', color: '#00a0e9', period: 0.5, pulses: square(0.25) },
  { name: 'PR3: D(2)', color: '#0010ff', period: 0.25, pulses: square(0.125) },
  { name: 'PR4: D(1)', color: '#d000e4', period: 1, pulses: clock8k },
  { name: 'PR5: D(9)', color: '#b3b3b3', period: 1, pulses: [[0.5, 0.5, 1, 1]] },
  { name: 'PR6: D(11)', color: '#ff85c1', period: 1, pulses: [[0.25, 0.25, 0.5, 0.5], [0.505, 0.525, 0.75, 0.75]] },
  { name: 'PR7: D(7)', color: '#6a14ff', period: 1, pulses: [[0, 0, 0.005, 0.005], [0.005, 0.03, 0.125, 0.125], [0.25, 0.25, 0.253, 0.27], [0.375, 0.375, 0.5, 0.5], [0.625, 0.625, 0.75, 0.75], [0.875, 0.875, 1, 1]] },
  { name: 'PR8: D(13)', color: '#f7981d', period: 1, pulses: [[0, 0, 0.04, 0.075], [0.125, 0.125, 0.1875, 0.1875], [0.25, 0.25, 0.3125, 0.3125], [0.375, 0.375, 0.378, 0.4], [0.5, 0.5, 0.5625, 0.5625], [0.625, 0.625, 0.628, 0.65], [0.75, 0.75, 0.785, 0.82], [0.875, 0.875, 0.878, 0.905]] }
];

for (let ms = 1; ms < 10; ms++) add('grid', 'path', { d: `M${X0 + ms * MS} 266V974` });
for (let row = 0; row <= 8; row++) {
  const high = Y0 + row * ROW, low = high + SWING;
  add('grid', 'path', { d: `M1060 ${high}H1904M1060 ${low}H1904` });
  add('ticks', 'text', { x: 1054.5, y: high + 5, 'text-anchor': 'end' }, '1');
  add('ticks', 'text', { x: 1054.5, y: low + 5, 'text-anchor': 'end' }, '0');
}
for (let ms = 0; ms <= 10; ms++) {
  add('ticks', 'text', { x: X0 + ms * MS, y: 994.7, 'text-anchor': 'middle' }, `${33 + ms}m`);
}

signals.forEach((signal, i) => {
  const high = Y0 + (i + 1) * ROW, low = high + SWING;
  let d = `M${X0} ${low}`;
  for (let start = 0; start < 10; start += signal.period) {
    for (const [a, b, c, e] of signal.pulses) {
      const x = t => (X0 + (start + t) * MS).toFixed(2);
      d += `L${x(a)} ${low}L${x(b)} ${high}L${x(c)} ${high}L${x(e)} ${low}`;
    }
  }
  d += `L${X0 + 10 * MS} ${low}`;
  add('waves', 'path', { d, stroke: signal.color });
  const y = 287.2 + i * 24.5;
  add('legend', 'path', { d: `M1798 ${y}H1822`, stroke: signal.color });
  add('legend', 'text', { x: 1823.5, y: y + 1.8 }, signal.name);
});
```
